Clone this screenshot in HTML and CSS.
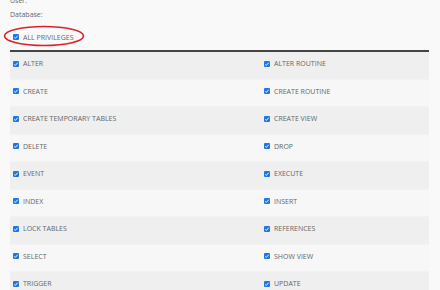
FILE: index.html
```html
<!DOCTYPE html>
<html lang="en">
  <head>
    <meta charset="UTF-8" />
    <title>Privileges</title>
    <link rel="stylesheet" href="styles.css">
  </head>
  <body>
    <div class="info">
      <p>User:</p>
      <p>Database:</p>
    </div>

    <div class="all">
      <label class="check-label"><span class="box"><svg viewBox="0 0 6 6"><path d="M1.3 3.4 L2.4 4.4 L4.7 1.7" /></svg></span>ALL PRIVILEGES</label>
      <svg class="ring" viewBox="0 0 82 22"><ellipse cx="41" cy="11" rx="39.5" ry="9.5" /></svg>
    </div>

    <div class="grid">
      <div class="row odd">
        <div class="cell"><span class="box"><svg viewBox="0 0 6 6"><path d="M1.3 3.4 L2.4 4.4 L4.7 1.7" /></svg></span>ALTER</div>
        <div class="cell"><span class="box"><svg viewBox="0 0 6 6"><path d="M1.3 3.4 L2.4 4.4 L4.7 1.7" /></svg></span>ALTER ROUTINE</div>
      </div>
      <div class="row">
        <div class="cell"><span class="box"><svg viewBox="0 0 6 6"><path d="M1.3 3.4 L2.4 4.4 L4.7 1.7" /></svg></span>CREATE</div>
        <div class="cell"><span class="box"><svg viewBox="0 0 6 6"><path d="M1.3 3.4 L2.4 4.4 L4.7 1.7" /></svg></span>CREATE ROUTINE</div>
      </div>
      <div class="row odd">
        <div class="cell"><span class="box"><svg viewBox="0 0 6 6"><path d="M1.3 3.4 L2.4 4.4 L4.7 1.7" /></svg></span>CREATE TEMPORARY TABLES</div>
        <div class="cell"><span class="box"><svg viewBox="0 0 6 6"><path d="M1.3 3.4 L2.4 4.4 L4.7 1.7" /></svg></span>CREATE VIEW</div>
      </div>
      <div class="row">
        <div class="cell"><span class="box"><svg viewBox="0 0 6 6"><path d="M1.3 3.4 L2.4 4.4 L4.7 1.7" /></svg></span>DELETE</div>
        <div class="cell"><span class="box"><svg viewBox="0 0 6 6"><path d="M1.3 3.4 L2.4 4.4 L4.7 1.7" /></svg></span>DROP</div>
      </div>
      <div class="row odd">
        <div class="cell"><span class="box"><svg viewBox="0 0 6 6"><path d="M1.3 3.4 L2.4 4.4 L4.7 1.7" /></svg></span>EVENT</div>
        <div class="cell"><span class="box"><svg viewBox="0 0 6 6"><path d="M1.3 3.4 L2.4 4.4 L4.7 1.7" /></svg></span>EXECUTE</div>
      </div>
      <div class="row">
        <div class="cell"><span class="box"><svg viewBox="0 0 6 6"><path d="M1.3 3.4 L2.4 4.4 L4.7 1.7" /></svg></span>INDEX</div>
        <div class="cell"><span class="box"><svg viewBox="0 0 6 6"><path d="M1.3 3.4 L2.4 4.4 L4.7 1.7" /></svg></span>INSERT</div>
      </div>
      <div class="row odd">
        <div class="cell"><span class="box"><svg viewBox="0 0 6 6"><path d="M1.3 3.4 L2.4 4.4 L4.7 1.7" /></svg></span>LOCK TABLES</div>
        <div class="cell"><span class="box"><svg viewBox="0 0 6 6"><path d="M1.3 3.4 L2.4 4.4 L4.7 1.7" /></svg></span>REFERENCES</div>
      </div>
      <div class="row">
        <div class="cell"><span class="box"><svg viewBox="0 0 6 6"><path d="M1.3 3.4 L2.4 4.4 L4.7 1.7" /></svg></span>SELECT</div>
        <div class="cell"><span class="box"><svg viewBox="0 0 6 6"><path d="M1.3 3.4 L2.4 4.4 L4.7 1.7" /></svg></span>SHOW VIEW</div>
      </div>
      <div class="row odd">
        <div class="cell"><span class="box"><svg viewBox="0 0 6 6"><path d="M1.3 3.4 L2.4 4.4 L4.7 1.7" /></svg></span>TRIGGER</div>
        <div class="cell"><span class="box"><svg viewBox="0 0 6 6"><path d="M1.3 3.4 L2.4 4.4 L4.7 1.7" /></svg></span>UPDATE</div>
      </div>
    </div>
  </body>
</html>
```

FILE: styles.css
```css
* {
  margin: 0;
  box-sizing: border-box;
}

body {
  background: #f9f9f9;
  font-family: "Open Sans", "Liberation Sans", sans-serif;
  font-size: 7px;
  color: #666;
  padding: 0 11px 0 10px;
  overflow: hidden;
}

.info {
  margin-top: -6px;
}

.info p {
  line-height: 13.5px;
}

.all {
  position: relative;
  height: 27px;
  padding: 7px 0 0 3px;
  border-bottom: 2px solid #444;
  margin-top: 4px;
}

.check-label {
  display: flex;
  align-items: center;
  height: 10px;
}

.ring {
  position: absolute;
  left: -7.5px;
  top: 0;
  width: 82px;
  height: 22px;
  overflow: visible;
}

.ring ellipse {
  fill: none;
  stroke: #d8232a;
  stroke-width: 1.6;
}

.box {
  display: inline-block;
  width: 6px;
  height: 6px;
  background: #1f78e0;
  border-radius: 1px;
  margin-right: 4px;
}

.box svg {
  display: block;
  width: 6px;
  height: 6px;
}

.box path {
  fill: none;
  stroke: #fff;
  stroke-width: 0.9;
}

.row {
  display: grid;
  grid-template-columns: 251px 1fr;
  height: 27.5px;
  padding-bottom: 3px;
  background: #f7f7f7;
  border-bottom: 1px solid #f2f2f2;
}

.row.odd {
  background: #efefef;
}

.cell {
  display: flex;
  align-items: center;
  padding-left: 3px;
}
```
